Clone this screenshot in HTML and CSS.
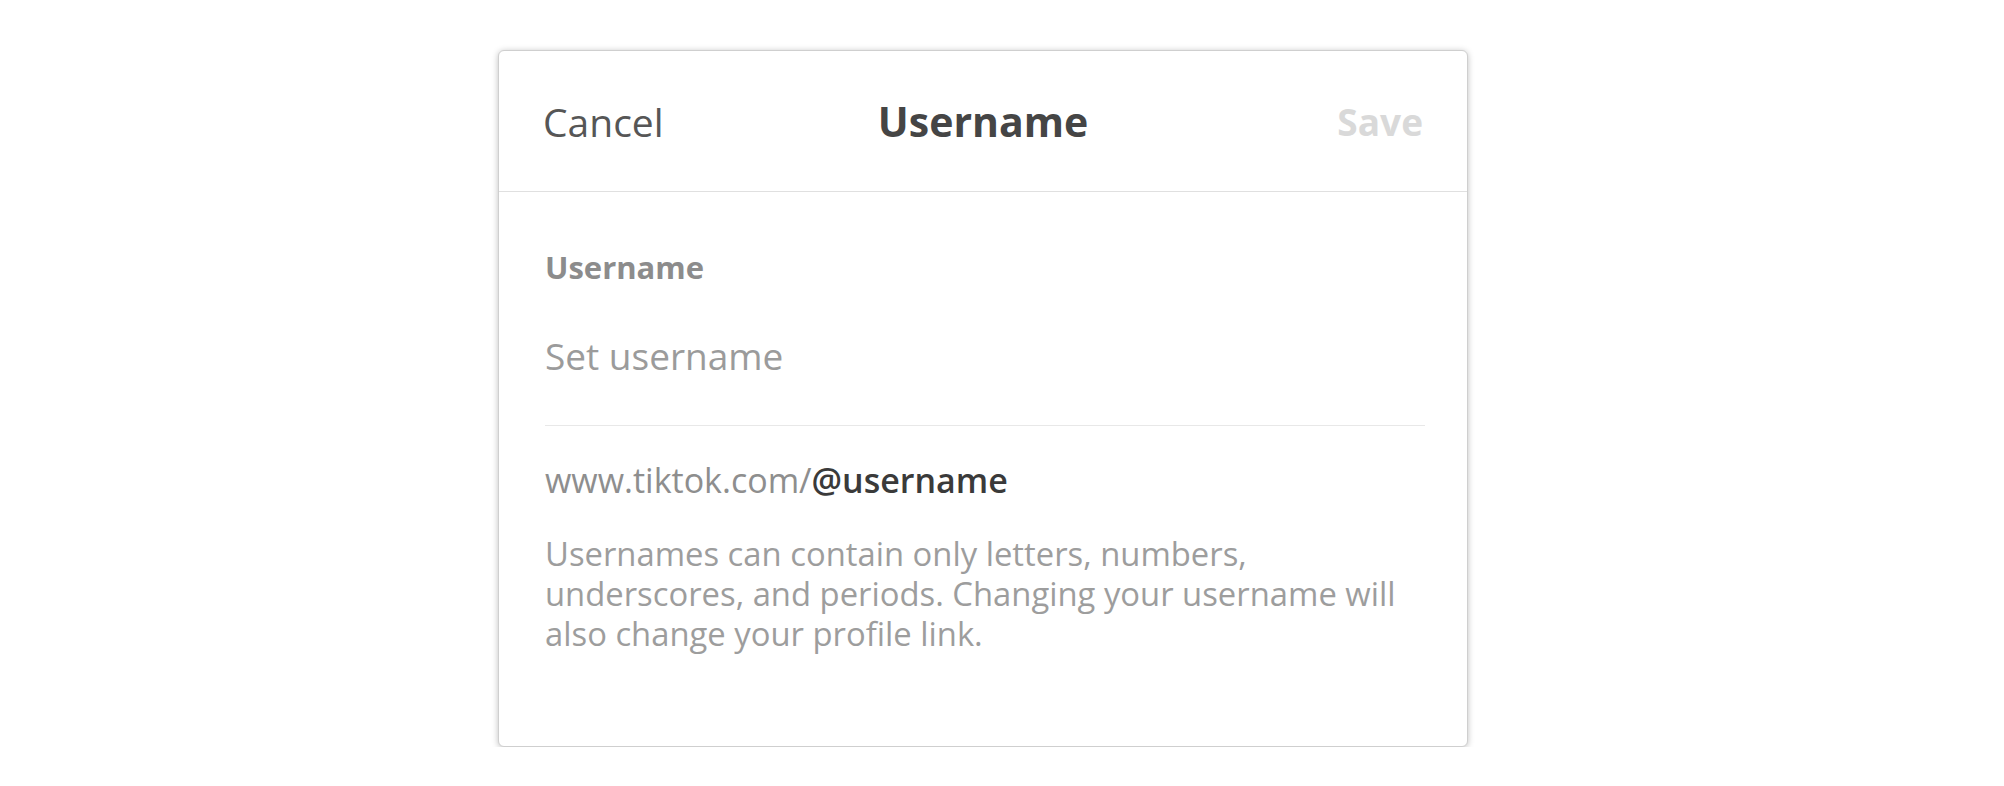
FILE: index.html
```html
<!DOCTYPE html>
<html lang="en">
<head>
<meta charset="utf-8">
<title>Username</title>
<link rel="stylesheet" href="styles.css">
</head>
<body>
<div class="page">
  <div class="card">
    <div class="header">
      <span class="cancel">Cancel</span>
      <span class="title">Username</span>
      <span class="save">Save</span>
    </div>
    <div class="body">
      <div class="label">Username</div>
      <div class="field">Set username</div>
      <div class="url">www.tiktok.com/<span class="handle">@username</span></div>
      <p class="hint">Usernames can contain only letters, numbers, underscores, and periods. Changing your username will also change your profile link.</p>
    </div>
  </div>
</div>
</body>
</html>
```
FILE: styles.css
```css
html, body {
  margin: 0;
  padding: 0;
  background: #ffffff;
}
body {
  font-family: "Open Sans", "Liberation Sans", sans-serif;
}
.page {
  padding: 50px 0 0 498px;
}
.card {
  box-sizing: border-box;
  width: 970px;
  height: 697px;
  border: 1px solid #cfcfcf;
  border-radius: 6px;
  box-shadow: 0 1px 6px rgba(0, 0, 0, 0.25);
  background: #fff;
}
.header {
  height: 140px;
  border-bottom: 1px solid #e0e0e0;
  padding: 0 44px;
  display: grid;
  grid-template-columns: 1fr auto 1fr;
  align-items: center;
}
.cancel {
  font-size: 39px;
  color: #565656;
  justify-self: start;
}
.title {
  font-size: 41px;
  font-weight: 700;
  color: #454545;
}
.save {
  font-size: 37px;
  font-weight: 700;
  color: #d9d9d9;
  justify-self: end;
}
.body {
  padding: 55px 42px 0 46px;
}
.label {
  font-size: 31px;
  line-height: 40px;
  font-weight: 700;
  color: #8c8c8c;
}
.field {
  margin-top: 45px;
  font-size: 37px;
  line-height: 48px;
  color: #9b9b9b;
  padding-bottom: 45px;
  border-bottom: 1px solid #e8e8e8;
}
.url {
  margin-top: 32px;
  font-size: 34px;
  line-height: 44px;
  color: #8e8e8e;
}
.handle {
  color: #3a3a3a;
  font-weight: 600;
}
.hint {
  margin: 32px 0 0;
  max-width: 868px;
  font-size: 32.8px;
  line-height: 40px;
  color: #9d9d9d;
}
```
